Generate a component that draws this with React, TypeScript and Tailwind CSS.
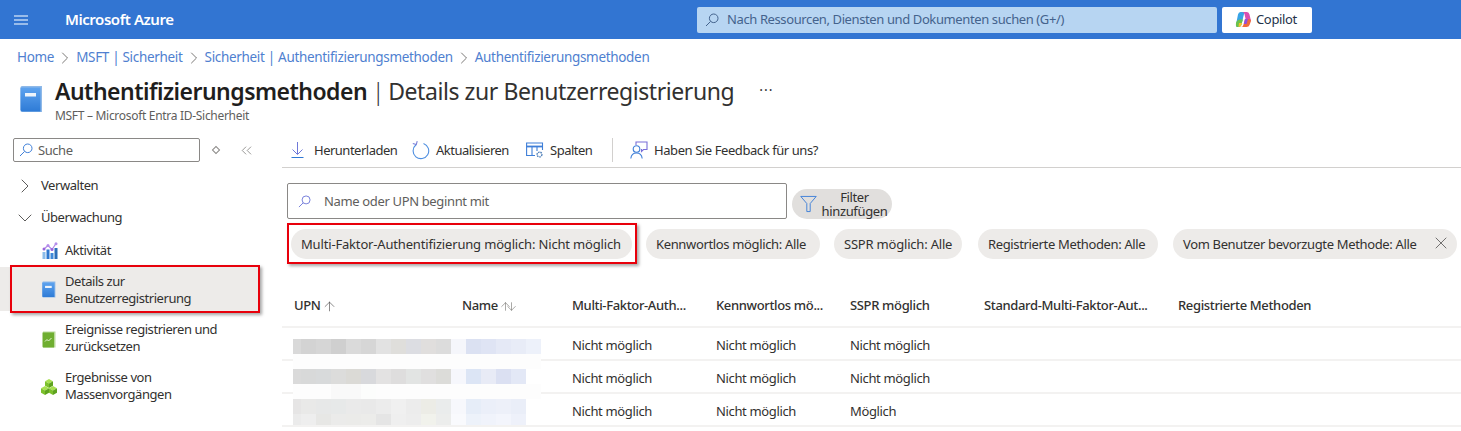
import React from "react";
import { ArrowDown, ArrowUp, ChevronDown, ChevronRight, ChevronsLeft, X } from "lucide-react";

const Glass = ({ size = 14, className = "" }: { size?: number; className?: string }) => (
  <svg width={size} height={size} viewBox="0 0 14 14" fill="none" stroke="currentColor" strokeWidth="1" className={`shrink-0 ${className}`}>
    <circle cx="8.700" cy="5.300" r="4.300" />
    <path d="M5.600 8.400 L1 13" />
  </svg>
);

const BookIcon = ({ w = 23, h = 28, id }: { w?: number; h?: number; id: string }) => (
  <svg width={w} height={h} viewBox="0 0 23 28" className="shrink-0">
    <defs>
      <linearGradient id={id} x1="0" y1="0" x2="0" y2="1">
        <stop offset="0" stopColor="#5ea3ef" />
        <stop offset="1" stopColor="#2e7bd6" />
      </linearGradient>
    </defs>
    <path d="M2 1 H22 V27 H2 Q0.500 27 0.500 25.500 V2.500 Q0.500 1 2 1 Z" fill="#8fb9e8" />
    <path d="M1.500 2.500 H20.500 V26.500 H2.500 Q0.500 26.500 0.500 24.500 V3.500 Q0.500 2.500 1.500 2.500 Z" fill={`url(#${id})`} />
    <rect x="5" y="8" width="11" height="3.500" fill="#eef4fb" />
  </svg>
);

const ActivityIcon = () => (
  <svg width="16" height="17" viewBox="0 0 16 17" className="shrink-0">
    <rect x="0.500" y="10" width="3" height="7" fill="#8cbcea" />
    <rect x="4.500" y="7.500" width="3" height="9.500" fill="#2f78cf" />
    <rect x="8.500" y="11" width="3" height="6" fill="#3f88d8" />
    <rect x="12.500" y="6" width="3" height="11" fill="#2d6eb8" />
    <path d="M2 7 L6 3.500 L10 7.500 L14 1.500" stroke="#b08ae8" strokeWidth="1.200" fill="none" />
    <circle cx="2" cy="7" r="1.500" fill="#9a63dc" />
    <circle cx="6" cy="3.500" r="1.500" fill="#b48cea" />
    <circle cx="10" cy="7.500" r="1.500" fill="#9a63dc" />
    <circle cx="14" cy="1.700" r="1.500" fill="#b48cea" />
  </svg>
);

const GreenBookIcon = () => (
  <svg width="14" height="17" viewBox="0 0 14 17" className="shrink-0">
    <path d="M1 0.500 H13.500 V16.500 H1 Z" fill="#b9d99a" />
    <path d="M0.500 1.500 H12 V16.500 H1.500 Q0.500 16.500 0.500 15.500 Z" fill="#6fae30" />
    <path d="M3 10.500 L5 8.500 L6.500 10 L9.500 7" stroke="#e6f3d6" strokeWidth="1" fill="none" />
  </svg>
);

const Cube = ({ x, y }: { x: number; y: number }) => (
  <g transform={`translate(${x} ${y})`}>
    <path d="M4 0 L8 2.200 L4 4.400 L0 2.200 Z" fill="#a8e04f" />
    <path d="M0 2.200 L4 4.400 V9 L0 6.800 Z" fill="#7cc02c" />
    <path d="M8 2.200 L4 4.400 V9 L8 6.800 Z" fill="#5ea31f" />
  </g>
);

const CubesIcon = () => (
  <svg width="16" height="16" viewBox="0 0 16 16" className="shrink-0">
    <Cube x={4} y={0} />
    <Cube x={0} y={7} />
    <Cube x={8} y={7} />
  </svg>
);

const CopilotIcon = () => (
  <svg width="17" height="17" viewBox="0 0 17 17" className="shrink-0">
    <path d="M5.500 1 H9.500 L6.500 13 Q6 16 3.500 16 H2.500 Q0.500 16 1 13.500 L3 3.500 Q3.500 1 5.500 1 Z" fill="#38a3e6" />
    <path d="M1 12 Q2 8.500 5 8.500 H8 L6.500 13 Q6 16 3.500 16 H2.500 Q0.500 16 1 12 Z" fill="#6cc24a" />
    <path d="M4 12 H7.200 L6.500 14 Q6 16 3.500 16 Z" fill="#f2c230" />
    <path d="M7 1 H12 Q14 1 14.500 3.500 L16 10 H11 L9.500 3 Q9 1 7 1 Z" fill="#d94fb0" />
    <path d="M16 10 L14.500 14 Q14 16 11.500 16 H6 Q8 16 8.500 13.500 L10 8 H14 Q16 8 16 10 Z" fill="#f0683c" />
    <path d="M10 8 H13 L11.500 13 H8.800 Z" fill="#8f4fe0" />
  </svg>
);

const DownloadIcon = () => (
  <svg width="13" height="17" viewBox="0 0 13 17" fill="none" strokeWidth="1" className="shrink-0">
    <path d="M6.500 0 V12 M1.500 7.500 L6.500 12.500 L11.500 7.500" stroke="#6f78d8" />
    <path d="M0.500 15.500 H12.500" stroke="#2f78d4" />
  </svg>
);

const RefreshIcon = () => (
  <svg width="18" height="19" viewBox="0 0 18 19" fill="none" strokeWidth="1.100" className="shrink-0">
    <path d="M11.500 2.500 A7.800 7.800 0 1 1 4 3.800" stroke="#4f8fe0" />
    <path d="M0.800 2.500 L4.300 3.600 L5.200 0.200" stroke="#7a7fd8" />
  </svg>
);

const ColumnsIcon = () => (
  <svg width="18" height="17" viewBox="0 0 18 17" fill="none" strokeWidth="1.100" className="shrink-0">
    <path d="M9 13.500 H0.600 V1 H16.500 V8" stroke="#3f7fd8" />
    <path d="M0.600 4.500 H16.500" stroke="#3f7fd8" strokeWidth="1.800" />
    <path d="M6 5 V13 M11 5 V9" stroke="#3f7fd8" />
    <circle cx="13.500" cy="12.500" r="2.400" stroke="#4f7fb8" strokeWidth="1.400" strokeDasharray="1.500 0.700" />
  </svg>
);

const FeedbackIcon = () => (
  <svg width="18" height="18" viewBox="0 0 18 18" fill="none" className="shrink-0">
    <circle cx="6.500" cy="8" r="3.300" stroke="#3f7fd8" strokeWidth="1.100" />
    <path d="M0.800 17.500 Q1.500 12 6.500 12 Q11.500 12 12.200 17.500" stroke="#3f7fd8" strokeWidth="1.100" />
    <path d="M6 4 V1 H17 V8.500 H13.500 L11.500 10.500 V8" stroke="#7a6fd8" strokeWidth="1.100" />
  </svg>
);

const FunnelIcon = () => (
  <svg width="17" height="18" viewBox="0 0 18 18" fill="none" stroke="#3f7fd8" strokeWidth="1" className="shrink-0">
    <path d="M0.800 1 H17.200 L10.800 8.500 V17 H7.200 V8.500 Z" />
  </svg>
);

const columns = "grid grid-cols-[168px_110px_144px_134px_134px_194px_1fr]";

const headers = [
  "UPN",
  "Name",
  "Multi-Faktor-Auth...",
  "Kennwortlos mö...",
  "SSPR möglich",
  "Standard-Multi-Faktor-Aut...",
  "Registrierte Methoden",
];

const rows = [
  ["Nicht möglich", "Nicht möglich", "Nicht möglich"],
  ["Nicht möglich", "Nicht möglich", "Nicht möglich"],
  ["Nicht möglich", "Nicht möglich", "Möglich"],
];

const faint = "bg-[#fdfdfd]";

// pixelated strips that hide the addresses
const mosaic: { h: string; cells: string[] }[] = [
  {
    h: "h-[15px]",
    cells: ["bg-[#d9d9d9]", "bg-[#d3d3d3]", "bg-[#d6d6d6]", "bg-[#cfcfcf]", "bg-[#dadada]", "bg-[#d6d6d6]", "bg-[#e2e2e2]", "bg-[#dfdedb]", "bg-[#dcdde2]", "bg-[#e0dedd]", "bg-[#dcdcdc]", "bg-[#f5f6fb]", "bg-[#dbe1f2]", "bg-[#dfe4f4]", "bg-[#e5e9f6]", "bg-[#e8ecf7]", "bg-[#edf1fa]"],
  },
  {
    h: "h-[15px]",
    cells: Array(17).fill(faint),
  },
  {
    h: "h-[15px]",
    cells: ["bg-[#dadada]", "bg-[#d8d9d9]", "bg-[#d8dadb]", "bg-[#dcdcdb]", "bg-[#dbdad6]", "bg-[#d8d9dc]", "bg-[#e3e2e2]", "bg-[#dedddd]", "bg-[#e2e4e3]", "bg-[#e0dfdf]", "bg-[#dcdcd9]", "bg-[#f6f7fc]", "bg-[#dce5f5]", "bg-[#e8ebf6]", "bg-[#dbe0f2]", "bg-[#e3e8f6]", "bg-white"],
  },
  {
    h: "h-[15px]",
    cells: [faint, faint, faint, "bg-[#f9f9f9]", "bg-[#f9f9f9]", "bg-[#fcfdfc]", faint, faint, faint, faint, faint, faint, faint, faint, faint, faint, faint],
  },
  {
    h: "h-[15px]",
    cells: ["bg-[#e6e5e5]", "bg-[#e9e9e8]", "bg-[#e7e8e8]", "bg-[#e7e9e9]", "bg-[#eaeaea]", "bg-[#e9e9e9]", "bg-[#ececec]", "bg-[#f0f0f0]", "bg-[#ececec]", "bg-[#ecece6]", "bg-[#eaecec]", "bg-[#f7f8fc]", "bg-[#e6edf8]", "bg-[#ebeff9]", "bg-[#edf0f9]", "bg-[#eaeef8]", "bg-white"],
  },
  {
    h: "h-[11px]",
    cells: ["bg-[#ebebeb]", "bg-[#eeeeee]", "bg-[#e7e7e5]", "bg-[#ebebea]", "bg-[#ebebe9]", "bg-[#ececea]", "bg-[#e5e5e5]", "bg-[#efefef]", "bg-[#ededed]", "bg-[#f1f2ec]", "bg-[#ecedec]", "bg-[#f9fafd]", "bg-[#edf2fa]", "bg-[#f0f3fb]", "bg-[#f3f5fc]", "bg-[#eef1fa]", "bg-white"],
  },
];

const Pill = ({ w, label, track = "", close }: { w: string; label: string; track?: string; close?: boolean }) => (
  <div className={`${w} h-[30px] shrink-0 rounded-full bg-[#edebe9] flex items-center justify-between pl-[10px] pr-[6px] text-[#323130] whitespace-nowrap`}>
    <span className={`pt-[2px] ${track}`}>{label}</span>
    {close && <X size={20} strokeWidth={0.8} className="text-[#323130] -mt-[2px] shrink-0" />}
  </div>
);

const App = () => {
  return (
    <div className="h-[431px] w-[1461px] overflow-hidden bg-white text-[13px] text-[#323130] font-['Noto_Sans',sans-serif] tracking-[-0.35px]">
      <header className="h-[39px] bg-[#3275d2] flex items-center">
        <svg width="14" height="10" viewBox="0 0 14 10" stroke="#bcd4f2" strokeWidth="1.400" className="ml-[14px] shrink-0">
          <path d="M0 1 H14 M0 5 H14 M0 9 H14" />
        </svg>
        <span className="ml-[37px] w-[632px] text-[15px] font-semibold text-white tracking-[-0.45px]">Microsoft Azure</span>
        <div className="h-[26px] w-[520px] rounded-[2px] bg-[#b7d5f2] flex items-center pl-[8px] text-[#44638d] tracking-[-0.39px]">
          <Glass size={14} className="mr-[8px]" />
          <span className="pt-px">Nach Ressourcen, Diensten und Dokumenten suchen (G+/)</span>
        </div>
        <div className="ml-[5px] h-[26px] w-[90px] rounded-[2px] bg-white flex items-center pl-[13px] gap-[4px] text-[#24324a]">
          <CopilotIcon />
          <span>Copilot</span>
        </div>
      </header>

      <nav className="h-[37px] pl-[17px] flex items-center gap-[1px] text-[13.500px] text-[#4f7fd0] tracking-[-0.32px]">
        <span>Home</span>
        <ChevronRight size={20} strokeWidth={1} className="text-[#605e5c]" />
        <span>MSFT | Sicherheit</span>
        <ChevronRight size={20} strokeWidth={1} className="text-[#605e5c]" />
        <span>Sicherheit | Authentifizierungsmethoden</span>
        <ChevronRight size={20} strokeWidth={1} className="text-[#605e5c]" />
        <span>Authentifizierungsmethoden</span>
      </nav>

      <div className="h-[62px] pl-[20px] flex items-start">
        <div className="pt-[9px]"><BookIcon id="book-lg" /></div>
        <div className="ml-[12px]">
          <div className="flex items-center h-[30px] text-[23px] leading-[30px]">
            <span className="font-semibold text-[#1f1e1d] tracking-[-0.52px]">Authentifizierungsmethoden</span>
            <span className="ml-[5px] mr-[4px] font-light">|</span>
            <span className="tracking-[-0.43px]">Details zur Benutzerregistrierung</span>
            <span className="ml-[25px] text-[14px] -mt-[2px] tracking-[1px] leading-none">···</span>
          </div>
          <div className="text-[12px] text-[#605e5c] mt-[1px] tracking-[-0.3px]">MSFT – Microsoft Entra ID-Sicherheit</div>
        </div>
      </div>

      <div className="flex">
        <aside className="w-[282px] shrink-0 tracking-[-0.45px]">
          <div className="flex items-center">
            <div className="ml-[13px] h-[24px] w-[187px] rounded-[2px] border border-[#8a8886] flex items-center pl-[5px] text-[#605e5c]">
              <Glass size={14} className="mr-[5px] text-[#3f7fd8]" />
              <span className="pt-px">Suche</span>
            </div>
            <span className="ml-[13px] h-[6px] w-[6px] rotate-45 border border-[#8a8886]" />
            <ChevronsLeft size={17} strokeWidth={0.9} className="ml-[19px] text-[#605e5c]" />
          </div>

          <div className="mt-[8px] h-[32px] flex items-center pl-[13px] gap-[4px]">
            <ChevronRight size={24} strokeWidth={0.8} />
            <span>Verwalten</span>
          </div>
          <div className="h-[32px] flex items-center pl-[13px] gap-[4px]">
            <ChevronDown size={24} strokeWidth={0.8} />
            <span>Überwachung</span>
          </div>
          <div className="h-[33px] flex items-center pl-[42px] gap-[7px]">
            <ActivityIcon />
            <span>Aktivität</span>
          </div>

          <div className="h-[44px] w-[260px] bg-[#edebe9] relative flex items-center pl-[42px] gap-[9px] leading-[17px]">
            <BookIcon id="book-sm" w={14} h={17} />
            <span className="pt-[2px]">Details zur<br />Benutzerregistrierung</span>
            <div className="absolute left-[10px] -top-[2px] -bottom-[2px] right-0 border-2 border-[#e8000b] shadow-[2px_2px_3px_rgba(0,0,0,0.35)]" />
          </div>

          <div className="mt-[4px] h-[48px] flex items-center pl-[42px] gap-[9px] leading-[17px]">
            <GreenBookIcon />
            <span className="-mt-[2px]">Ereignisse registrieren und<br />zurücksetzen</span>
          </div>
          <div className="h-[48px] flex items-center pl-[41px] gap-[8px] leading-[17px]">
            <CubesIcon />
            <span className="-mt-[2px]">Ergebnisse von<br />Massenvorgängen</span>
          </div>
        </aside>

        <main className="flex-1 min-w-0">
          <div className="h-[30px] border-b border-[#d2d0ce] flex items-start pl-[9px] tracking-[-0.5px]">
            <div className="flex items-center h-[24px]">
              <DownloadIcon />
              <span className="ml-[10px] w-[98px] pt-[2px]">Herunterladen</span>
              <RefreshIcon />
              <span className="ml-[6px] w-[90px] pt-[2px]">Aktualisieren</span>
              <ColumnsIcon />
              <span className="ml-[6px] w-[62px] pt-[2px]">Spalten</span>
              <span className="h-[24px] w-px bg-[#d2d0ce] mr-[17px]" />
              <FeedbackIcon />
              <span className="ml-[6px] pt-[2px] tracking-[-0.42px]">Haben Sie Feedback für uns?</span>
            </div>
          </div>

          <div className="ml-[5px] mt-[15px] flex items-end">
            <div className="h-[36px] w-[500px] rounded-[2px] border border-[#8a8886] flex items-center pl-[10px] text-[#605e5c]">
              <Glass size={13} className="mr-[13px] text-[#6f78d8]" />
              <span className="pt-[2px]">Name oder UPN beginnt mit</span>
            </div>
            <div className="ml-[5px] h-[30px] w-[100px] rounded-full bg-[#e1dfdd] flex items-center pl-[8px]">
              <FunnelIcon />
              <span className="w-[75px] text-center leading-[14px]">Filter hinzufügen</span>
            </div>
          </div>

          <div className="mt-[4px] flex items-center">
            <div className="ml-[5px] h-[41px] w-[350px] shrink-0 border-2 border-[#e8000b] shadow-[2px_2px_3px_rgba(0,0,0,0.35)] flex items-center pl-[2px]">
              <Pill w="w-[341px]" label="Multi-Faktor-Authentifizierung möglich: Nicht möglich" track="tracking-[-0.17px]" />
            </div>
            <div className="ml-[9px] flex gap-[14px]">
              <Pill w="w-[174px]" label="Kennwortlos möglich: Alle" />
              <Pill w="w-[128px]" label="SSPR möglich: Alle" track="tracking-[-0.2px]" />
              <div className="ml-[2px]"><Pill w="w-[180px]" label="Registrierte Methoden: Alle" /></div>
              <div className="ml-[1px]"><Pill w="w-[284px]" label="Vom Benutzer bevorzugte Methode: Alle" close /></div>
            </div>
          </div>

          <div className="relative mt-[22px]">
            <div className={`${columns} h-[42px] items-center border-b-2 border-[#f3f2f1] font-medium pl-[12px]`}>
              {headers.map((h, i) => (
                <div key={h} className="flex items-center gap-[1px]">
                  <span>{h}</span>
                  {i === 0 && <ArrowUp size={15} strokeWidth={0.9} className="text-[#323130]" />}
                  {i === 1 && (
                    <span className="flex -space-x-[7px] text-[#605e5c]">
                      <ArrowUp size={13} strokeWidth={1} />
                      <ArrowDown size={13} strokeWidth={1} />
                    </span>
                  )}
                </div>
              ))}
            </div>
            {rows.map((r, i) => (
              <div key={i} className={`${columns} h-[33px] items-center border-b-2 border-[#f3f2f1] pl-[12px] pt-[5px]`}>
                <div />
                <div />
                {r.map((c, j) => (
                  <div key={j}>{c}</div>
                ))}
              </div>
            ))}
            {/* mosaic sits on top of the first two columns */}
            <div className="absolute left-[11px] top-[53px] w-[250px]">
              {mosaic.map((m, i) => (
                <div key={i} className={`flex ${m.h}`}>
                  {m.cells.map((c, j) => (
                    <div key={j} className={`${c} ${j === 0 ? "w-[8px]" : "w-[15px]"}`} />
                  ))}
                </div>
              ))}
            </div>
          </div>
        </main>
      </div>
    </div>
  );
};

export default App;
